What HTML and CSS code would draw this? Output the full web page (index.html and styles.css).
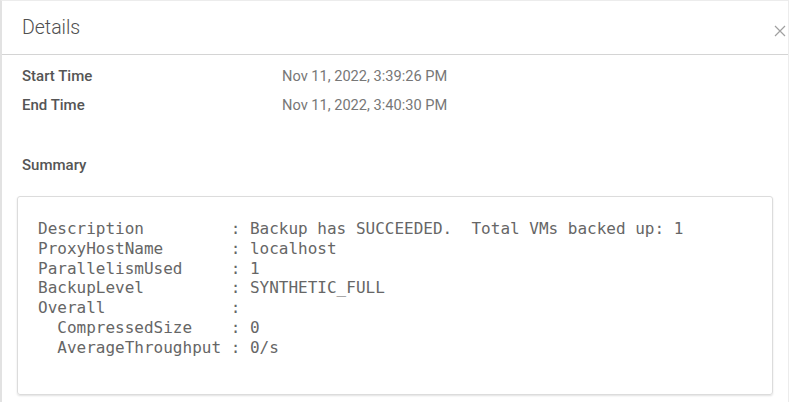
FILE: index.html
```html
<!DOCTYPE html>
<html>
<head>
<meta charset="utf-8">
<link rel="stylesheet" href="styles.css">
</head>
<body>
<div class="panel">
  <div class="header">
    <div class="title">Details</div>
    <button class="close" aria-label="Close">
      <svg width="12" height="12" viewBox="0 0 12 12"><path d="M1 1L11 11M11 1L1 11" stroke="#a0a0a0" stroke-width="1.2" fill="none"/></svg>
    </button>
  </div>
  <div class="body">
    <div class="rows">
      <div class="label">Start Time</div><div class="value">Nov 11, 2022, 3:39:26 PM</div>
      <div class="label">End Time</div><div class="value">Nov 11, 2022, 3:40:30 PM</div>
    </div>
    <div class="section">Summary</div>
    <pre class="summary">Description         : Backup has SUCCEEDED.  Total VMs backed up: 1
ProxyHostName       : localhost
ParallelismUsed     : 1
BackupLevel         : SYNTHETIC_FULL
Overall             :
  CompressedSize    : 0
  AverageThroughput : 0/s</pre>
  </div>
</div>
</body>
</html>
```
FILE: styles.css
```css
html, body {
  margin: 0;
  padding: 0;
  background: #ffffff;
}
body {
  font-family: Roboto, "Noto Sans", Arial, sans-serif;
  color: #555;
}
.panel {
  height: 402px;
  box-sizing: border-box;
  border-top: 1px solid #ececec;
  border-left: 2px solid #e2e2e2;
  border-right: 1px solid #ececec;
}
.header {
  height: 53px;
  border-bottom: 1px solid #d4d4d4;
  display: flex;
  align-items: center;
  justify-content: space-between;
  padding-left: 20px;
  padding-right: 1px;
}
.title {
  font-size: 19.5px;
  font-weight: 300;
  color: #505050;
}
.close {
  border: 0;
  background: none;
  padding: 0;
  width: 14px;
  height: 14px;
  display: flex;
  align-items: center;
  justify-content: center;
  margin-top: 6px;
}
.body {
  padding: 13px 15px 0 20px;
}
.rows {
  display: grid;
  grid-template-columns: 260px 1fr;
  row-gap: 12px;
  line-height: 17px;
  font-size: 15px;
}
.label {
  font-weight: 500;
  color: #555;
}
.value {
  color: #777;
  font-size: 14.6px;
}
.section {
  margin-top: 43px;
  font-size: 15px;
  font-weight: 500;
  color: #555;
  line-height: 17px;
}
.summary {
  margin: 22px 0 0 -5px;
  border: 1px solid #dcdcdc;
  border-radius: 3px;
  box-shadow: 0 1px 2px rgba(0,0,0,0.12);
  padding: 22px 20px 21px 20px;
  font-family: "DejaVu Sans Mono", "Liberation Mono", monospace;
  font-size: 16px;
  line-height: 19.8px;
  color: #666;
  height: 154px;
  box-sizing: content-box;
}
```
